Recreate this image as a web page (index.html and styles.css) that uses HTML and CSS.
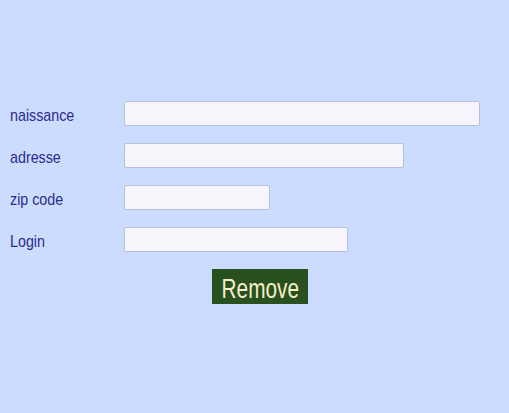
FILE: index.html
```html
<!DOCTYPE html>
<html>
<head>
<meta charset="utf-8">
<link rel="stylesheet" href="styles.css">
</head>
<body>
<form class="form">
  <div class="grid">
    <label class="label"><span class="narrow">naissance</span></label>
    <input class="field w-naissance" type="text">
    <label class="label"><span class="narrow">adresse</span></label>
    <input class="field w-adresse" type="text">
    <label class="label"><span class="narrow">zip code</span></label>
    <input class="field w-zip" type="text">
    <label class="label"><span class="narrow">Login</span></label>
    <input class="field w-login" type="text">
  </div>
  <div class="actions">
    <button type="button" class="btn"><span class="btn-text">Remove</span></button>
  </div>
</form>
</body>
</html>
```
FILE: styles.css
```css
html, body {
  margin: 0;
  padding: 0;
  background: #ccdcff;
  height: 100%;
}
body {
  font-family: "Liberation Sans", Arial, sans-serif;
}
.form {
  padding: 101px 0 0 10px;
}
.grid {
  display: grid;
  grid-template-columns: 114px auto;
  row-gap: 17px;
  align-items: start;
  justify-items: start;
}
.label {
  font-size: 17px;
  line-height: 17px;
  padding-top: 6px;
  color: #2b2b8c;
}
.narrow {
  display: inline-block;
  transform: scaleX(0.84);
  transform-origin: left center;
  white-space: nowrap;
}
.field {
  box-sizing: border-box;
  height: 25px;
  margin: 0;
  padding: 0 4px;
  border: 1px solid #b8c0d8;
  border-radius: 2px;
  background: #f5f5fb;
  outline: none;
}
.w-naissance { width: 356px; }
.w-adresse { width: 280px; }
.w-zip { width: 146px; }
.w-login { width: 224px; }
.actions {
  padding: 17px 0 0 202px;
}
.btn {
  box-sizing: border-box;
  width: 96px;
  height: 35px;
  margin: 0;
  padding: 7px 0 0;
  border: none;
  background: #29501f;
  display: flex;
  justify-content: center;
  align-items: flex-start;
  overflow: hidden;
}
.btn-text {
  display: inline-block;
  color: #f4efc8;
  font-family: "Liberation Sans", Arial, sans-serif;
  font-size: 27px;
  line-height: 27px;
  transform: scaleX(0.77);
  white-space: nowrap;
}
```
